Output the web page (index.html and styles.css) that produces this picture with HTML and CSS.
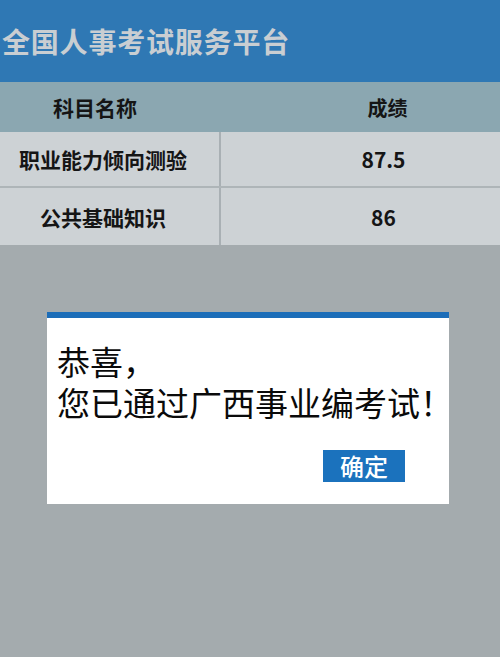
FILE: index.html
```html
<!DOCTYPE html>
<html lang="zh">
<head>
<meta charset="utf-8">
<link rel="stylesheet" href="styles.css">
</head>
<body>
<div class="page">
  <header class="topbar">
    <h1 class="title">全国人事考试服务平台</h1>
  </header>
  <div class="table">
    <div class="thead">
      <div class="cell name">科目名称</div>
      <div class="cell score">成绩</div>
    </div>
    <div class="row">
      <div class="cell name">职业能力倾向测验</div>
      <div class="cell score">87.5</div>
    </div>
    <div class="row">
      <div class="cell name">公共基础知识</div>
      <div class="cell score">86</div>
    </div>
  </div>
  <div class="overlay">
    <div class="dialog">
      <p class="msg"><span class="line">恭喜，</span><span class="line">您已通过广西事业编考试！</span></p>
      <div class="actions"><button class="ok">确定</button></div>
    </div>
  </div>
</div>
</body>
</html>
```
FILE: styles.css
```css
* { box-sizing: border-box; }
html, body { margin: 0; padding: 0; }
body {
  width: 500px;
  height: 657px;
  background: #a4abae;
  font-family: "Noto Sans CJK SC", "Noto Sans", sans-serif;
  overflow: hidden;
}
.page { display: flex; flex-direction: column; height: 657px; }
.topbar {
  height: 82px;
  background: #2f78b4;
  display: flex;
  align-items: center;
  padding-left: 2px;
}
.title {
  margin: 0;
  font-size: 28px;
  font-weight: 700;
  color: #c9ced2;
  letter-spacing: 0.8px;
}
.table { display: flex; flex-direction: column; }
.thead {
  height: 50px;
  background: #8ba7b1;
  display: grid;
  grid-template-columns: 221px 1fr;
  align-items: center;
}
.row {
  height: 56px;
  background: #cdd2d5;
  display: grid;
  grid-template-columns: 221px 1fr;
  align-items: center;
  border-bottom: 2px solid #aeb5b8;
}
.row:last-child { border-bottom: none; height: 57px; }
.cell {
  text-align: center;
  font-size: 21px;
  font-weight: 700;
  color: #151515;
}
.thead .name { padding-right: 31px; }
.thead .score { padding-left: 54px; font-size: 20px; }
.row .name {
  height: 100%;
  display: flex;
  align-items: center;
  justify-content: center;
  border-right: 2px solid #a9b0b4;
  padding-right: 13px;
}
.row .score { padding-left: 46px; }
.overlay {
  flex: 1;
  display: flex;
  justify-content: center;
  padding-top: 67px;
  padding-right: 4px;
}
.dialog {
  width: 402px;
  height: 192px;
  background: #ffffff;
  border-top: 6px solid #1c6db8;
  padding: 23px 0 0 10px;
  display: flex;
  flex-direction: column;
}
.msg {
  margin: 0;
  display: flex;
  flex-direction: column;
  font-size: 33px;
  color: #0a0a0a;
  font-weight: 400;
  white-space: nowrap;
}
.line { display: block; height: 41px; line-height: 41px; }
.actions {
  display: flex;
  justify-content: flex-end;
  padding-right: 44px;
  margin-top: 27px;
}
.ok {
  width: 82px;
  height: 32px;
  background: #1b72bd;
  color: #ffffff;
  border: none;
  padding: 0;
  font-family: "Noto Sans CJK SC", sans-serif;
  font-size: 24px;
  font-weight: 500;
  line-height: 32px;
}
```
